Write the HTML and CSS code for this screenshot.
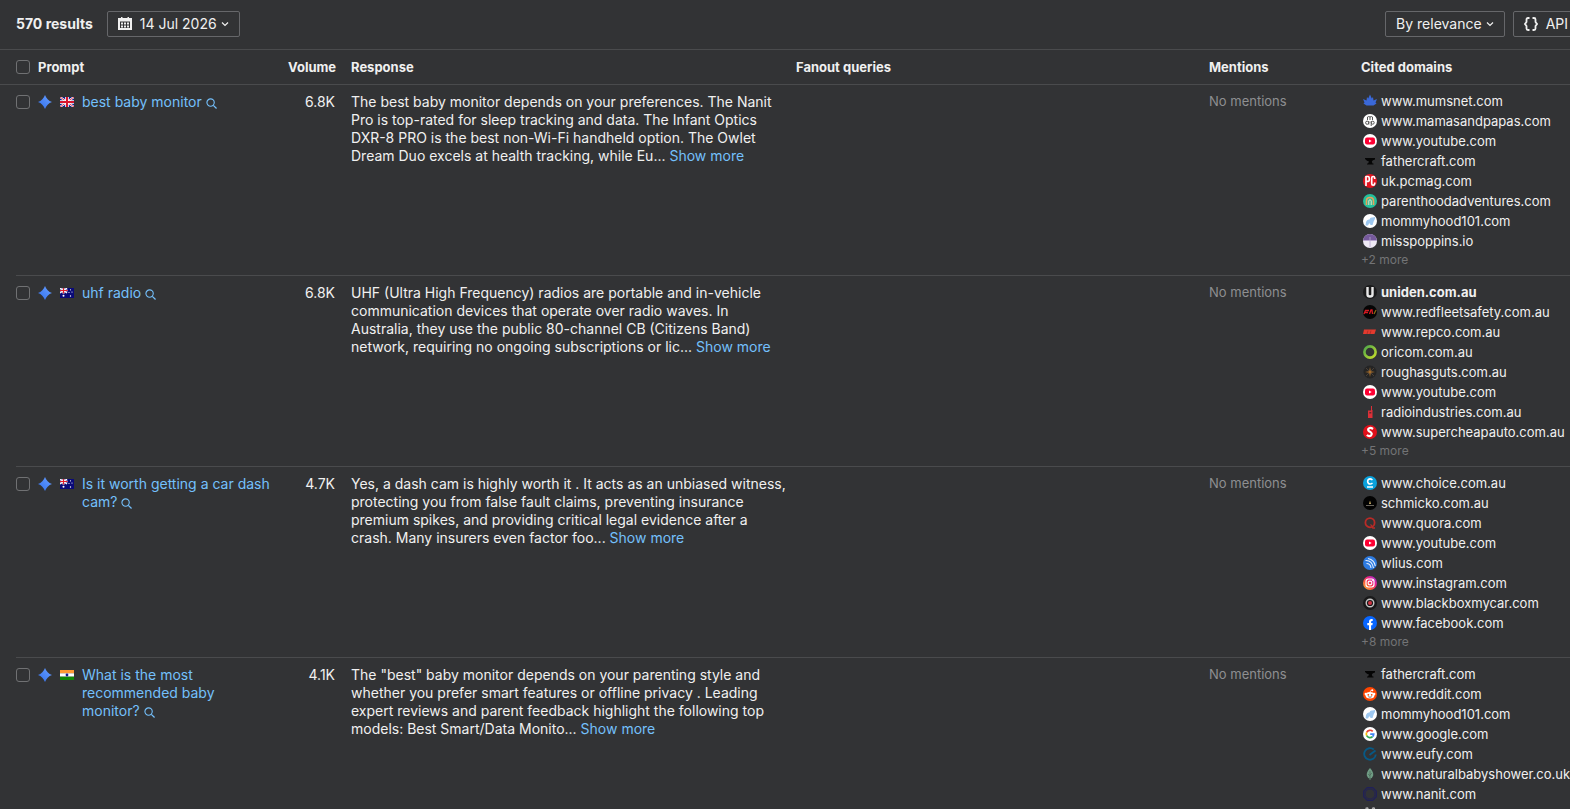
FILE: index.html
```html
<!DOCTYPE html>
<html lang="en">
<head>
  <meta charset="UTF-8" />
  <meta name="viewport" content="width=device-width, initial-scale=1.0"/>
  <title>AI responses</title>
  <link rel="stylesheet" href="styles.css">
</head>
<body>

<!-- icon sprite -->
<svg class="sprite" aria-hidden="true">
  <defs>
    <linearGradient id="sparkFill" x1="0" y1="1" x2="1" y2="0">
      <stop offset="0" stop-color="#2f6fee"/><stop offset="1" stop-color="#6aa0ff"/>
    </linearGradient>
    <linearGradient id="instaFill" x1="0" y1="1" x2="1" y2="0">
      <stop offset="0" stop-color="#ffc83d"/><stop offset=".35" stop-color="#fb5a3a"/><stop offset=".65" stop-color="#e81e8c"/><stop offset="1" stop-color="#8a3ce8"/>
    </linearGradient>
    <linearGradient id="ringFill" x1="0" y1="0" x2="1" y2="1">
      <stop offset="0" stop-color="#4fa84a"/><stop offset="1" stop-color="#c4dc2c"/>
    </linearGradient>
    <clipPath id="round"><circle cx="7" cy="7" r="7"/></clipPath>
  </defs>
  <symbol id="spark" viewBox="0 0 14 14"><path fill="url(#sparkFill)" d="M7 0C8.200 3.400 10.600 5.800 14 7C10.600 8.200 8.200 10.600 7 14C5.800 10.600 3.400 8.200 0 7C3.400 5.800 5.800 3.400 7 0Z"/></symbol>
  <symbol id="search" viewBox="0 0 12 12"><circle cx="5" cy="5" r="4" fill="none" stroke="currentColor" stroke-width="1.200"/><path d="M8 8L11.500 11.500" stroke="currentColor" stroke-width="1.400"/></symbol>
  <symbol id="chevron" viewBox="0 0 8 8"><path d="M1 2.500L4 5.500L7 2.500" fill="none" stroke="currentColor" stroke-width="1.200"/></symbol>
  <symbol id="calendar" viewBox="0 0 14 14"><path fill="currentColor" fill-rule="evenodd" d="M0 1H3V0H4.500V1H9.500V0H11V1H14V13H0ZM2 4.500V11H12V4.500Z"/><path fill="currentColor" d="M3 5.500h2v2H3zM6 5.500h2v2H6zM9 5.500h2v2H9zM3 8.500h2v2H3zM6 8.500h2v2H6zM9 8.500h2v2H9z"/></symbol>
  <symbol id="braces" viewBox="0 0 14 14"><path d="M5.500 1H4Q2.500 1 2.500 2.500V5L1 7L2.500 9V11.500Q2.500 13 4 13H5.500M8.500 1H10Q11.500 1 11.500 2.500V5L13 7L11.500 9V11.500Q11.500 13 10 13H8.500" fill="none" stroke="currentColor" stroke-width="1.800"/></symbol>

  <symbol id="flag-gb" viewBox="0 0 14 10"><path fill="#0b1f8f" d="M0 0h14v10H0z"/><path d="M0 0L14 10M14 0L0 10" stroke="#fff" stroke-width="2.200"/><path d="M0 0L14 10M14 0L0 10" stroke="#d8162f" stroke-width=".8"/><path d="M7 0V10M0 5H14" stroke="#fff" stroke-width="3.600"/><path d="M7 0V10M0 5H14" stroke="#d8162f" stroke-width="2"/></symbol>
  <symbol id="flag-au" viewBox="0 0 14 10"><path fill="#0a0a78" d="M0 0h14v10H0z"/><path d="M0 0L7 5M7 0L0 5" stroke="#fff" stroke-width="1.400"/><path d="M3.500 0V5.500M0 2.500H7.500" stroke="#fff" stroke-width="2.200"/><path d="M3.500 0V5.500M0 2.500H7.500" stroke="#e01e2c" stroke-width="1.200"/><g fill="#fff"><circle cx="3.500" cy="7.800" r="1"/><circle cx="10.500" cy="1.800" r=".6"/><circle cx="9" cy="4.500" r=".6"/><circle cx="12" cy="4" r=".6"/><circle cx="10.500" cy="8" r=".7"/></g></symbol>
  <symbol id="flag-in" viewBox="0 0 14 10"><path fill="#ff9933" d="M0 0h14v3.400H0z"/><path fill="#fff" d="M0 3.300h14v3.400H0z"/><path fill="#128807" d="M0 6.700h14V10H0z"/><circle cx="7" cy="5" r="1.400" fill="#1a1a8c"/></symbol>

  <symbol id="d-mumsnet" viewBox="0 0 14 14"><path fill="#3a68d8" d="M7 .5L8.800 4.500L10 3L10.500 6.500L14 5L12.500 8.500L13.500 9.500L10.500 11.500H3.500L.5 9.500L1.500 8.500L0 5L3.500 6.500L4 3L5.200 4.500Z"/></symbol>
  <symbol id="d-mamas" viewBox="0 0 14 14"><circle cx="7" cy="7" r="7" fill="#fff"/><g fill="none" stroke="#555" stroke-width="1"><path d="M4.500 6V3Q5.800 2 7 3V6M7 3Q8.300 2 9.500 3V6"/><circle cx="4.200" cy="8.700" r="1.600"/><path d="M5.800 7V10.500M8.200 12V7"/><circle cx="9.700" cy="8.700" r="1.500"/></g></symbol>
  <symbol id="d-youtube" viewBox="0 0 14 14"><circle cx="7" cy="7" r="7" fill="#fff"/><rect x="2" y="3.500" width="10" height="7" rx="2" fill="#ff0033"/><path fill="#fff" d="M6 5.500L8.700 7L6 8.500Z"/></symbol>
  <symbol id="d-fathercraft" viewBox="0 0 14 14"><path fill="#050505" d="M2 4H12V5.500Q9.500 6 8.800 7.500L9.500 9.500H10.500V10.500H4V9.500H5L6 7.500Q4 7 2 5Z"/></symbol>
  <symbol id="d-pcmag" viewBox="0 0 14 14"><g clip-path="url(#round)"><path fill="#e2131f" d="M0 0h14v14H0z"/><path d="M3 12V2.500H5Q6.300 2.500 6.300 5T5 7.300H3M11.700 5V4Q11.700 2.500 10.200 2.500T8.700 4V9.500Q8.700 11.200 10.200 11.200T11.700 9.500V8.500" fill="none" stroke="#fff" stroke-width="1.700"/></g></symbol>
  <symbol id="d-parenthood" viewBox="0 0 14 14"><circle cx="7" cy="7" r="7" fill="#24c09c"/><path d="M3.500 11V7Q3.500 3.500 7 3.500T10.500 7V11" fill="none" stroke="#e8a15c" stroke-width="1.600"/><path d="M5.800 11V7Q5.800 5.800 7 5.800T8.200 7V11" fill="none" stroke="#f3e2c8" stroke-width="1"/></symbol>
  <symbol id="d-mommyhood" viewBox="0 0 14 14"><circle cx="7" cy="7" r="7" fill="#fff"/><path fill="#9ec8f0" d="M3 8Q4 5 6.500 5.500Q7 3 9.500 3.500L12 3Q12.500 5.500 10.800 7L9.500 11H7.500L7 9.500H6L5 11.500H2.500Z"/></symbol>
  <symbol id="d-misspoppins" viewBox="0 0 14 14"><g clip-path="url(#round)"><path fill="#efeaf5" d="M0 0h14v14H0z"/><path fill="#765a9c" d="M0 0h14v6.500H0z"/><path d="M0 6.500H14M7 3V13" fill="none" stroke="#b8a6cf" stroke-width=".8"/></g></symbol>

  <symbol id="d-uniden" viewBox="0 0 14 14"><circle cx="7" cy="7" r="7" fill="#1b1b1c"/><path d="M4.500 2V9.500Q4.500 11.500 7 11.500T9.500 9.500V2" fill="none" stroke="#e8e8e8" stroke-width="2.400"/></symbol>
  <symbol id="d-redfleet" viewBox="0 0 14 14"><circle cx="7" cy="7" r="7" fill="#050505"/><path d="M1 9L2.500 5.500H6M2 7.500H5M6.500 9L8 5H9L9.500 9" fill="none" stroke="#d51a22" stroke-width="1.300"/><path d="M11 9L13 5" stroke="#8c6a18" stroke-width="1.200"/></symbol>
  <symbol id="d-repco" viewBox="0 0 14 14"><path fill="#e23a2e" d="M1 4.500H13L11.500 9H0Z"/><path d="M4 9L5 5.500M7 9L8 5.500" stroke="#a82b24" stroke-width=".8"/></symbol>
  <symbol id="d-oricom" viewBox="0 0 14 14"><circle cx="7" cy="7" r="5.600" fill="none" stroke="url(#ringFill)" stroke-width="2.600"/></symbol>
  <symbol id="d-rough" viewBox="0 0 14 14"><circle cx="7" cy="7" r="6.500" fill="#242424"/><path d="M3 3L11 11M11 3L3 11" stroke="#4a4139" stroke-width="1"/><path fill="#a86f2c" d="M7 2L7.800 6.200L12 7L7.800 7.800L7 12L6.200 7.800L2 7L6.200 6.200Z"/></symbol>
  <symbol id="d-radio" viewBox="0 0 14 14"><path fill="#dd3038" d="M8 1H9V5H9.500V13H5V5.500H8Z"/><path fill="#662a2e" d="M6.300 7h2v1.500h-2z"/></symbol>
  <symbol id="d-supercheap" viewBox="0 0 14 14"><circle cx="7" cy="7" r="7" fill="#e00f1a"/><path d="M10 4Q7 1.800 5.300 4Q4.500 5.800 7.500 7Q9.700 8.800 8 10.500Q6 11.800 3.800 10" fill="none" stroke="#fff" stroke-width="2.200"/></symbol>

  <symbol id="d-choice" viewBox="0 0 14 14"><circle cx="7" cy="7" r="7" fill="#0aa2dc"/><path d="M9.500 4Q7 2 5.200 3.700Q4 6 5.500 7.500Q7.300 8.800 9.500 7M4 11H10" fill="none" stroke="#fff" stroke-width="1.600"/></symbol>
  <symbol id="d-schmicko" viewBox="0 0 14 14"><circle cx="7" cy="7" r="7" fill="#030303"/><path d="M3 9.500H11" stroke="#77736a" stroke-width=".9"/><path d="M7 4.500L8 8H6Z" fill="#d2b46a"/></symbol>
  <symbol id="d-quora" viewBox="0 0 14 14"><circle cx="7" cy="6.700" r="4.600" fill="none" stroke="#b92b27" stroke-width="1.800"/><path d="M7.500 8.500Q9 9.500 9.800 12H12" fill="none" stroke="#b92b27" stroke-width="1.300"/></symbol>
  <symbol id="d-wlius" viewBox="0 0 14 14"><circle cx="7" cy="7" r="7" fill="#2e7be0"/><path d="M2.500 4.500Q9 4 10.500 12M3.500 7.500Q7.500 7.500 8 12M5 2.500Q11.500 4 12.300 10" fill="none" stroke="#e4eefb" stroke-width="1.100"/></symbol>
  <symbol id="d-instagram" viewBox="0 0 14 14"><circle cx="7" cy="7" r="7" fill="url(#instaFill)"/><rect x="3" y="3" width="8" height="8" rx="2.400" fill="none" stroke="#fff" stroke-width="1.200"/><circle cx="7" cy="7" r="1.900" fill="none" stroke="#fff" stroke-width="1.100"/><circle cx="9.400" cy="4.600" r=".6" fill="#fff"/></symbol>
  <symbol id="d-blackbox" viewBox="0 0 14 14"><circle cx="7" cy="7" r="7" fill="#19191a"/><circle cx="7" cy="7" r="3.800" fill="none" stroke="#c4c4c4" stroke-width="1.400"/><circle cx="7" cy="7" r="2" fill="#cf3340"/></symbol>
  <symbol id="d-facebook" viewBox="0 0 14 14"><circle cx="7" cy="7" r="7" fill="#0866ff"/><path fill="#fff" d="M6 14V9.200H4.300V7H6V5.700Q6 3 8.600 3H9.700V5H8.900Q8.100 5 8.100 5.900V7H9.700L9.400 9.200H8.100V14Z"/></symbol>

  <symbol id="d-reddit" viewBox="0 0 14 14"><circle cx="7" cy="7" r="7" fill="#ff4500"/><ellipse cx="7" cy="8.200" rx="4.400" ry="3.300" fill="#fff"/><circle cx="2.800" cy="7" r="1.200" fill="#fff"/><circle cx="11.200" cy="7" r="1.200" fill="#fff"/><circle cx="9.300" cy="3.200" r="1" fill="#fff"/><path d="M7 5.500Q7 3.300 9 3.200" fill="none" stroke="#fff" stroke-width=".7"/><circle cx="5.300" cy="7.800" r=".9" fill="#ff4500"/><circle cx="8.700" cy="7.800" r=".9" fill="#ff4500"/><path d="M5.300 9.700Q7 10.800 8.700 9.700" fill="none" stroke="#333" stroke-width=".7"/></symbol>
  <symbol id="d-google" viewBox="0 0 14 14"><circle cx="7" cy="7" r="7" fill="#fff"/><g fill="none" stroke-width="1.700"><path stroke="#ea4335" d="M3.700 5.300A3.700 3.700 0 0 1 9.700 4.400"/><path stroke="#fbbc05" d="M3.700 5.300A3.700 3.700 0 0 0 3.700 8.700"/><path stroke="#34a853" d="M3.700 8.700A3.700 3.700 0 0 0 9.500 9.700"/><path stroke="#4285f4" d="M9.500 9.700A3.700 3.700 0 0 0 10.700 7.200H7.200"/></g></symbol>
  <symbol id="d-eufy" viewBox="0 0 14 14"><path d="M10.800 2.500A5.800 5.800 0 1 0 12.800 7.500M6.500 8L12.500 3.500" fill="none" stroke="#075985" stroke-width="1.900"/></symbol>
  <symbol id="d-natural" viewBox="0 0 14 14"><path fill="#6f9c84" d="M7 1Q10.800 5 10.200 8.500Q9.500 11 7.400 11.500V13H6.600V11.500Q4.500 11 3.800 8.500Q3.200 5 7 1Z"/><path d="M7 4V12M7 8L8.800 6M7 9L5.200 7" stroke="#3f5c4f" stroke-width=".6"/></symbol>
  <symbol id="d-nanit" viewBox="0 0 14 14"><path d="M4.300 .7H9.700L13.300 4.300V9.700L9.700 13.300H4.300L.7 9.700V4.300Z" fill="none" stroke="#20205a" stroke-width="1.200"/><circle cx="7" cy="7" r="5" fill="none" stroke="#20205a" stroke-width=".8"/></symbol>
  <symbol id="d-amazon" viewBox="0 0 14 14"><path d="M2.500 1.500Q5 0 5 2.500V8M9 1.500Q11.500 0 11.500 2.500V8" fill="none" stroke="#b5b5b5" stroke-width="1.400"/></symbol>
</svg>

<main class="report">
  <div class="toolbar">
    <strong class="results">570 results</strong>
    <button class="btn" type="button"><svg class="icon"><use href="#calendar"/></svg>14 Jul 2026<svg class="caret"><use href="#chevron"/></svg></button>
    <div class="toolbar-right">
      <button class="btn" type="button">By relevance<svg class="caret"><use href="#chevron"/></svg></button>
      <button class="btn" type="button"><svg class="icon"><use href="#braces"/></svg>API</button>
    </div>
  </div>

  <table class="prompts">
    <thead>
      <tr>
        <th class="check"><input type="checkbox" aria-label="Select all"></th>
        <th class="prompt">Prompt</th>
        <th class="volume">Volume</th>
        <th class="response">Response</th>
        <th class="fanout">Fanout queries</th>
        <th class="mentions">Mentions</th>
        <th class="cited">Cited domains</th>
      </tr>
    </thead>
    <tbody>
      <tr>
        <td class="check"><input type="checkbox" aria-label="Select best baby monitor"></td>
        <td class="prompt">
          <div class="prompt-line">
            <svg class="spark"><use href="#spark"/></svg>
            <svg class="flag"><use href="#flag-gb"/></svg>
            <a href="#">best baby monitor <svg class="search"><use href="#search"/></svg></a>
          </div>
        </td>
        <td class="volume">6.8K</td>
        <td class="response">The best baby monitor depends on your preferences. The Nanit Pro is top-rated for sleep tracking and data. The Infant Optics DXR-8 PRO is the best non-Wi-Fi handheld option. The Owlet Dream Duo excels at health tracking, while Eu... <a href="#">Show more</a></td>
        <td class="fanout"></td>
        <td class="mentions">No mentions</td>
        <td class="cited">
          <ul class="domains">
            <li><svg><use href="#d-mumsnet"/></svg>www.mumsnet.com</li>
            <li><svg><use href="#d-mamas"/></svg>www.mamasandpapas.com</li>
            <li><svg><use href="#d-youtube"/></svg>www.youtube.com</li>
            <li><svg><use href="#d-fathercraft"/></svg>fathercraft.com</li>
            <li><svg><use href="#d-pcmag"/></svg>uk.pcmag.com</li>
            <li><svg><use href="#d-parenthood"/></svg>parenthoodadventures.com</li>
            <li><svg><use href="#d-mommyhood"/></svg>mommyhood101.com</li>
            <li><svg><use href="#d-misspoppins"/></svg>misspoppins.io</li>
          </ul>
          <button class="more" type="button">+2 more</button>
        </td>
      </tr>
      <tr>
        <td class="check"><input type="checkbox" aria-label="Select uhf radio"></td>
        <td class="prompt">
          <div class="prompt-line">
            <svg class="spark"><use href="#spark"/></svg>
            <svg class="flag"><use href="#flag-au"/></svg>
            <a href="#">uhf radio <svg class="search"><use href="#search"/></svg></a>
          </div>
        </td>
        <td class="volume">6.8K</td>
        <td class="response">UHF (Ultra High Frequency) radios are portable and in-vehicle communication devices that operate over radio waves. In Australia, they use the public 80-channel CB (Citizens Band) network, requiring no ongoing subscriptions or lic... <a href="#">Show more</a></td>
        <td class="fanout"></td>
        <td class="mentions">No mentions</td>
        <td class="cited">
          <ul class="domains">
            <li class="own"><svg><use href="#d-uniden"/></svg>uniden.com.au</li>
            <li><svg><use href="#d-redfleet"/></svg>www.redfleetsafety.com.au</li>
            <li><svg><use href="#d-repco"/></svg>www.repco.com.au</li>
            <li><svg><use href="#d-oricom"/></svg>oricom.com.au</li>
            <li><svg><use href="#d-rough"/></svg>roughasguts.com.au</li>
            <li><svg><use href="#d-youtube"/></svg>www.youtube.com</li>
            <li><svg><use href="#d-radio"/></svg>radioindustries.com.au</li>
            <li><svg><use href="#d-supercheap"/></svg>www.supercheapauto.com.au</li>
          </ul>
          <button class="more" type="button">+5 more</button>
        </td>
      </tr>
      <tr>
        <td class="check"><input type="checkbox" aria-label="Select Is it worth getting a car dash cam?"></td>
        <td class="prompt">
          <div class="prompt-line">
            <svg class="spark"><use href="#spark"/></svg>
            <svg class="flag"><use href="#flag-au"/></svg>
            <a href="#">Is it worth getting a car dash cam? <svg class="search"><use href="#search"/></svg></a>
          </div>
        </td>
        <td class="volume">4.7K</td>
        <td class="response">Yes, a dash cam is highly worth it . It acts as an unbiased witness, protecting you from false fault claims, preventing insurance premium spikes, and providing critical legal evidence after a crash. Many insurers even factor foo... <a href="#">Show more</a></td>
        <td class="fanout"></td>
        <td class="mentions">No mentions</td>
        <td class="cited">
          <ul class="domains">
            <li><svg><use href="#d-choice"/></svg>www.choice.com.au</li>
            <li><svg><use href="#d-schmicko"/></svg>schmicko.com.au</li>
            <li><svg><use href="#d-quora"/></svg>www.quora.com</li>
            <li><svg><use href="#d-youtube"/></svg>www.youtube.com</li>
            <li><svg><use href="#d-wlius"/></svg>wlius.com</li>
            <li><svg><use href="#d-instagram"/></svg>www.instagram.com</li>
            <li><svg><use href="#d-blackbox"/></svg>www.blackboxmycar.com</li>
            <li><svg><use href="#d-facebook"/></svg>www.facebook.com</li>
          </ul>
          <button class="more" type="button">+8 more</button>
        </td>
      </tr>
      <tr>
        <td class="check"><input type="checkbox" aria-label="Select What is the most recommended baby monitor?"></td>
        <td class="prompt">
          <div class="prompt-line">
            <svg class="spark"><use href="#spark"/></svg>
            <svg class="flag"><use href="#flag-in"/></svg>
            <a href="#">What is the most recommended baby monitor? <svg class="search"><use href="#search"/></svg></a>
          </div>
        </td>
        <td class="volume">4.1K</td>
        <td class="response">The "best" baby monitor depends on your parenting style and whether you prefer smart features or offline privacy . Leading expert reviews and parent feedback highlight the following top models: Best Smart/Data Monito... <a href="#">Show more</a></td>
        <td class="fanout"></td>
        <td class="mentions">No mentions</td>
        <td class="cited">
          <ul class="domains">
            <li><svg><use href="#d-fathercraft"/></svg>fathercraft.com</li>
            <li><svg><use href="#d-reddit"/></svg>www.reddit.com</li>
            <li><svg><use href="#d-mommyhood"/></svg>mommyhood101.com</li>
            <li><svg><use href="#d-google"/></svg>www.google.com</li>
            <li><svg><use href="#d-eufy"/></svg>www.eufy.com</li>
            <li><svg><use href="#d-natural"/></svg>www.naturalbabyshower.co.uk</li>
            <li><svg><use href="#d-nanit"/></svg>www.nanit.com</li>
            <li><svg><use href="#d-amazon"/></svg></li>
          </ul>
        </td>
      </tr>
    </tbody>
  </table>
</main>

</body>
</html>
```
FILE: styles.css
```css
* {
  box-sizing: border-box;
}

body {
  background-color: #323335;
  color: #f0f0f0;
  font-family: Inter, "Liberation Sans", sans-serif;
  font-size: 14px;
  line-height: 18px;
  margin: 0;
  height: 100vh;
  overflow: hidden;
}

.sprite {
  position: absolute;
  width: 0;
  height: 0;
}

.report {
  width: 100%;
  min-width: 1595px;
}

a {
  color: #74c0fc;
  text-decoration: none;
}

/* toolbar */
.toolbar {
  display: flex;
  align-items: center;
  gap: 14px;
  padding: 11px 16px 12px;
  border-bottom: 1px solid #4a4b4d;
}

.toolbar-right {
  display: flex;
  gap: 8px;
  margin-left: auto;
}

.btn {
  display: flex;
  align-items: center;
  gap: 8px;
  height: 26px;
  padding: 0 10px;
  background: transparent;
  border: 1px solid #66676a;
  border-radius: 2px;
  color: inherit;
  font: inherit;
  white-space: nowrap;
  cursor: pointer;
}

.icon {
  width: 14px;
  height: 14px;
}

.caret {
  width: 8px;
  height: 8px;
  margin-left: -4px;
}

/* table */
.prompts {
  width: 100%;
  table-layout: fixed;
  border-collapse: separate;
  border-spacing: 0;
}

th,
td {
  padding: 8px;
  text-align: left;
  vertical-align: top;
  border-bottom: 1px solid #4a4b4d;
}

th {
  font-size: 13px;
  font-weight: 700;
}

th.check, td.check {
  width: 30px;
  padding: 10px 0 0 16px;
}

/* row dividers start at the checkbox, not at the window edge */
td.check {
  border-bottom: 0;
  background: linear-gradient(#4a4b4d, #4a4b4d) 16px 100% / 100% 1px no-repeat;
}

.prompt {
  width: 250px;
}

th.volume, td.volume {
  width: 63px;
  text-align: right;
}

.response {
  width: 445px;
}

td.response {
  padding-right: 0;
}

.fanout {
  width: 413px;
}

.mentions {
  width: 152px;
}

td.mentions {
  font-size: 13px;
  color: #8e8f91;
  padding-top: 7px;
}

input[type="checkbox"] {
  appearance: none;
  display: block;
  width: 14px;
  height: 14px;
  margin: 0;
  border: 1px solid #707173;
  border-radius: 3px;
}

.prompt-line {
  display: flex;
  align-items: flex-start;
  gap: 8px;
}

.spark {
  flex: none;
  width: 14px;
  height: 14px;
  margin-top: 2px;
}

.flag {
  flex: none;
  width: 14px;
  height: 10px;
  margin-top: 4px;
}

.search {
  width: 11px;
  height: 11px;
  vertical-align: -2px;
}

td.cited {
  font-size: 13px;
  padding: 6px 8px;
}

.domains {
  list-style: none;
  margin: 0;
  padding: 0;
}

.domains li {
  display: flex;
  align-items: center;
  gap: 4px;
  height: 20px;
  padding-left: 2px;
  white-space: nowrap;
}

.domains svg {
  flex: none;
  width: 14px;
  height: 14px;
}

.own {
  font-weight: 700;
}

.more {
  display: block;
  padding: 0;
  border: 0;
  background: none;
  color: #737476;
  font: inherit;
  font-size: 12px;
  line-height: 18px;
  cursor: pointer;
}
```
